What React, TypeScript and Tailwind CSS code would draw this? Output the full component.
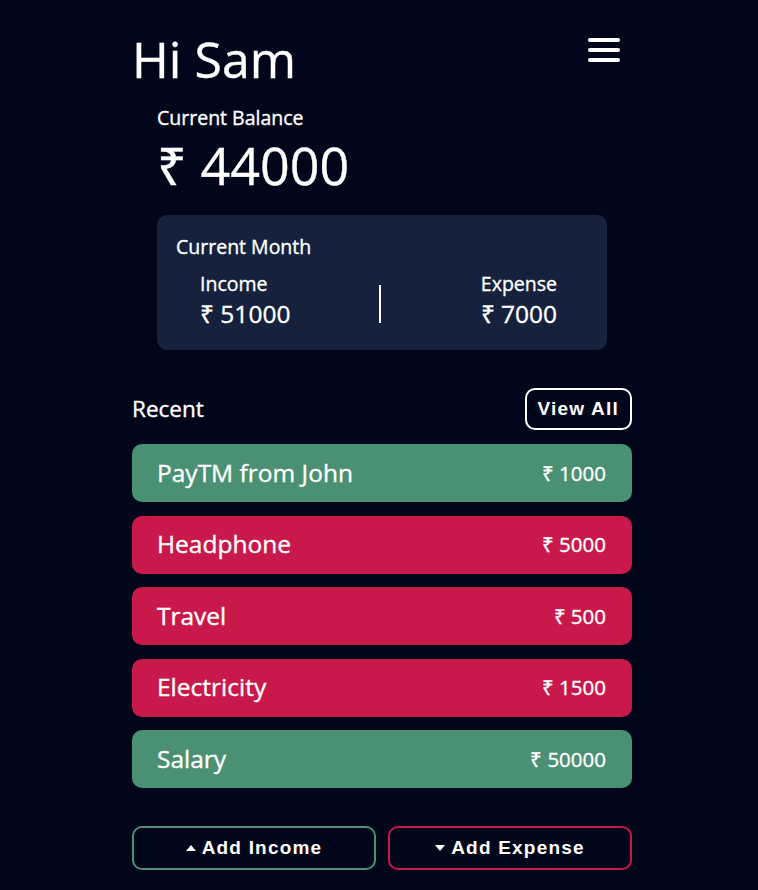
const rows = [
  { name: 'PayTM from John', amount: 1000, income: true },
  { name: 'Headphone', amount: 5000, income: false },
  { name: 'Travel', amount: 500, income: false },
  { name: 'Electricity', amount: 1500, income: false },
  { name: 'Salary', amount: 50000, income: true },
];

const Caret = ({ up }: { up: boolean }) => (
  <svg width="10" height="6" viewBox="0 0 10 6" className="fill-white">
    {up ? <path d="M0 6 L5 0 L10 6 Z" /> : <path d="M0 0 L10 0 L5 6 Z" />}
  </svg>
);

const App = () => {
  return (
    <div className="min-h-screen bg-[#02061a] text-white font-['Open_Sans',sans-serif]">
      <div className="w-[500px] ml-[132px] pt-[28px] [-webkit-text-stroke:0.35px_white]">
        {/* Header */}
        <div className="flex items-start justify-between">
          <h1 className="text-[50px] leading-[62px] font-normal">Hi Sam</h1>
          <button className="mt-[10px] mr-[12px] flex flex-col gap-[6px]">
            <span className="block w-[32px] h-[4px] bg-white rounded-full" />
            <span className="block w-[32px] h-[4px] bg-white rounded-full" />
            <span className="block w-[32px] h-[4px] bg-white rounded-full" />
          </button>
        </div>

        {/* Balance */}
        <div className="pl-[25px] mt-[14px]">
          <div className="text-[19.5px] leading-[27px]">Current Balance</div>
          <div className="text-[52px] leading-[64px] mt-[2px]">₹ 44000</div>

          <div className="w-[450px] mt-[18px] rounded-[10px] bg-[#15213d] px-[19px] pt-[19px] pb-[20px]">
            <div className="text-[19.5px] leading-[26px]">Current Month</div>
            <div className="flex items-center justify-between pl-[24px] pr-[31px] mt-[10px]">
              <div className="flex flex-col">
                <span className="text-[19.5px] leading-[27px]">Income</span>
                <span className="text-[24.5px] leading-[33px]">₹ 51000</span>
              </div>
              <div className="w-[2px] h-[38px] bg-white mt-[8px] mr-[12px]" />
              <div className="flex flex-col items-end">
                <span className="text-[19.5px] leading-[27px]">Expense</span>
                <span className="text-[24.5px] leading-[33px]">₹ 7000</span>
              </div>
            </div>
          </div>
        </div>

        {/* Recent */}
        <div className="flex items-center justify-between mt-[38px]">
          <span className="text-[22.5px]">Recent</span>
          <button className="h-[42px] px-[11px] border-2 border-white rounded-[10px] font-['Liberation_Sans',sans-serif] font-bold text-[19px] tracking-[1.2px] [-webkit-text-stroke:0]">
            View All
          </button>
        </div>

        <div className="flex flex-col gap-[13.5px] mt-[14px]">
          {rows.map((r) => (
            <div
              key={r.name}
              className={`h-[58px] rounded-[10px] flex items-center justify-between pl-[25px] pr-[26px] ${
                r.income ? 'bg-[#4a9072]' : 'bg-[#c9194a]'
              }`}
            >
              <span className="text-[24.5px]">{r.name}</span>
              <span className="text-[20.5px]">₹ {r.amount}</span>
            </div>
          ))}
        </div>

        {/* Actions */}
        <div className="grid grid-cols-2 gap-[12px] mt-[38px] pb-[19px]">
          <button className="h-[44px] border-2 border-[#4a9072] rounded-[10px] flex items-center justify-center gap-[6px] font-['Liberation_Sans',sans-serif] font-bold text-[19px] tracking-[1.2px] [-webkit-text-stroke:0]">
            <Caret up />
            Add Income
          </button>
          <button className="h-[44px] border-2 border-[#c9194a] rounded-[10px] flex items-center justify-center gap-[6px] font-['Liberation_Sans',sans-serif] font-bold text-[19px] tracking-[1.2px] [-webkit-text-stroke:0]">
            <Caret up={false} />
            Add Expense
          </button>
        </div>
      </div>
    </div>
  );
};

export default App;
